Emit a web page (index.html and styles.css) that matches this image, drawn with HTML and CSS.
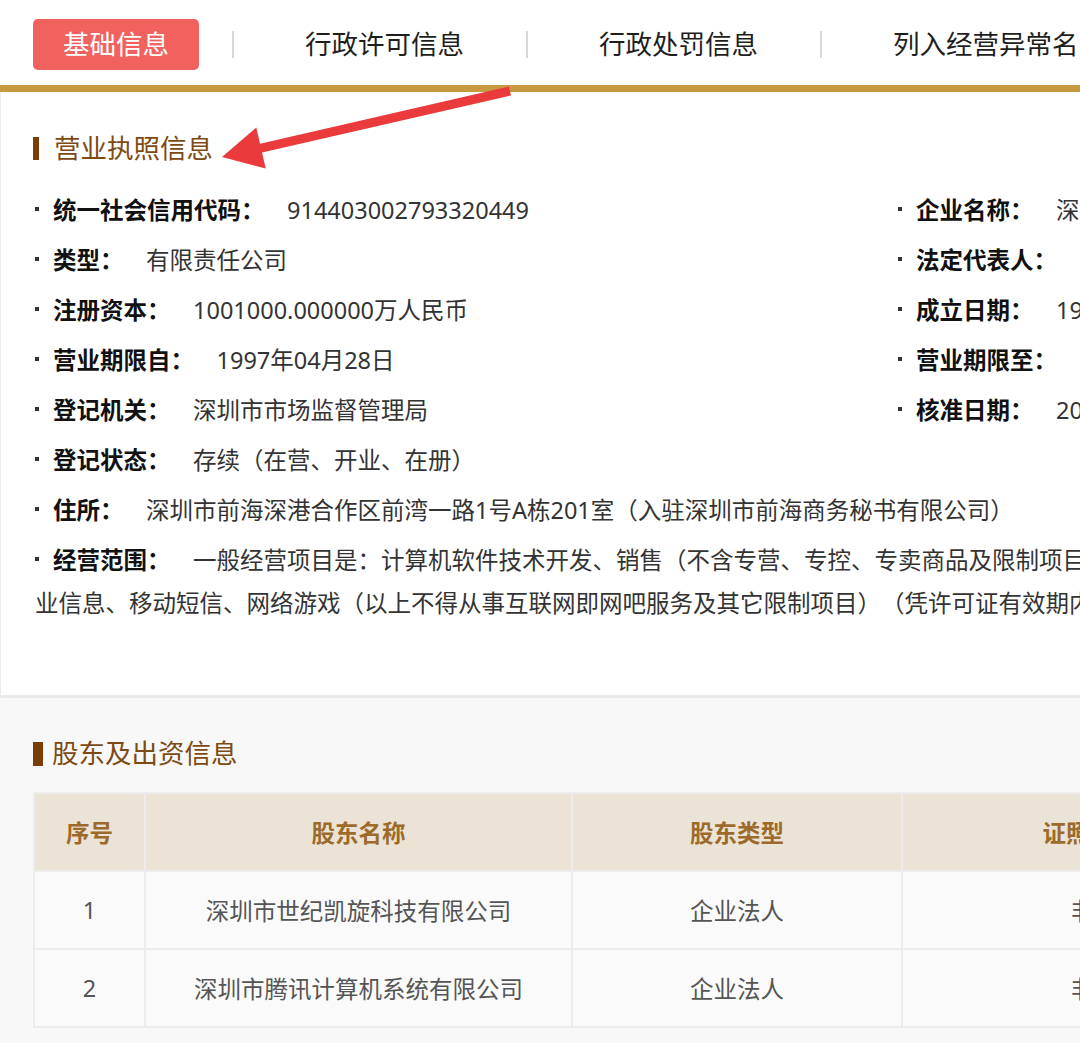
FILE: index.html
```html
<!DOCTYPE html>
<html lang="zh-CN">
<head>
<meta charset="utf-8">
<title>基础信息</title>
<link rel="stylesheet" href="styles.css">
</head>
<body>
<div class="page">
  <nav class="tabs">
    <a class="tab active">基础信息</a>
    <a class="tab plain">行政许可信息</a>
    <a class="tab plain">行政处罚信息</a>
    <a class="tab plain">列入经营异常名录信息</a>
    <a class="tab plain">列入严重违法失信企业名单信息</a>
  </nav>

  <section class="card">
    <h2 class="sec-title">营业执照信息</h2>
    <div class="row">
      <div class="cell left"><i class="dot"></i><span class="label">统一社会信用代码：</span><span class="val">914403002793320449</span></div>
      <div class="cell"><i class="dot"></i><span class="label">企业名称：</span><span class="val">深圳市腾讯计算机系统有限公司</span></div>
    </div>
    <div class="row">
      <div class="cell left"><i class="dot"></i><span class="label">类型：</span><span class="val">有限责任公司</span></div>
      <div class="cell"><i class="dot"></i><span class="label">法定代表人：</span><span class="val">马化腾</span></div>
    </div>
    <div class="row">
      <div class="cell left"><i class="dot"></i><span class="label">注册资本：</span><span class="val">1001000.000000万人民币</span></div>
      <div class="cell"><i class="dot"></i><span class="label">成立日期：</span><span class="val">1998年11月11日</span></div>
    </div>
    <div class="row">
      <div class="cell left"><i class="dot"></i><span class="label">营业期限自：</span><span class="val">1997年04月28日</span></div>
      <div class="cell"><i class="dot"></i><span class="label">营业期限至：</span><span class="val">永续经营</span></div>
    </div>
    <div class="row">
      <div class="cell left"><i class="dot"></i><span class="label">登记机关：</span><span class="val">深圳市市场监督管理局</span></div>
      <div class="cell"><i class="dot"></i><span class="label">核准日期：</span><span class="val">2023年03月21日</span></div>
    </div>
    <div class="row">
      <div class="cell"><i class="dot"></i><span class="label">登记状态：</span><span class="val">存续（在营、开业、在册）</span></div>
    </div>
    <div class="row">
      <div class="cell"><i class="dot"></i><span class="label">住所：</span><span class="val">深圳市前海深港合作区前湾一路1号A栋201室（入驻深圳市前海商务秘书有限公司）</span></div>
    </div>
    <div class="row">
      <div class="cell"><i class="dot"></i><span class="label">经营范围：</span><span class="val">一般经营项目是：计算机软件技术开发、销售（不含专营、专控、专卖商品及限制项目）；数据库及计算机网络服务。许可经营项目是：信息服务业务，商<br>业信息、移动短信、网络游戏（以上不得从事互联网即网吧服务及其它限制项目）（凭许可证有效期内经营）</span></div>
    </div>
  </section>

  <section class="holders">
    <h2 class="sec-title thick">股东及出资信息</h2>
    <table class="grid">
      <colgroup>
        <col class="c1"><col class="c2"><col class="c3"><col class="c4"><col class="c5">
      </colgroup>
      <thead>
        <tr><th>序号</th><th>股东名称</th><th>股东类型</th><th>证照/证件类型</th><th>证照/证件号码</th></tr>
      </thead>
      <tbody>
        <tr><td>1</td><td>深圳市世纪凯旋科技有限公司</td><td>企业法人</td><td>非公示项</td><td>非公示项</td></tr>
        <tr><td>2</td><td>深圳市腾讯计算机系统有限公司</td><td>企业法人</td><td>非公示项</td><td>非公示项</td></tr>
      </tbody>
    </table>
  </section>

  <svg class="arrow" width="1080" height="200" viewBox="0 0 1080 200">
    <polygon points="509,86.6 260,143.7 256.3,127.6 222,157 265.7,168.6 262,152.5 511,95.4" fill="#ea3a3c"/>
  </svg>
</div>
</body>
</html>
```
FILE: styles.css
```css
html, body {
  margin: 0;
  padding: 0;
  overflow: hidden;
  background: #f8f8f8;
}
body {
  font-family: "Noto Sans", "Noto Sans CJK SC", sans-serif;
  color: #333;
  text-spacing-trim: space-all;
}
.page {
  position: relative;
  width: 1700px;
  min-height: 1043px;
}

/* tabs */
.tabs {
  display: flex;
  align-items: center;
  height: 81px;
  padding: 4px 0 0 33px;
  background: #fff;
  border-bottom: 7px solid #c9993f;
  white-space: nowrap;
}
.tab {
  flex-shrink: 0;
  font-size: 26.5px;
  color: #1e1e1e;
}
.tab.active {
  width: 166px;
  height: 51px;
  line-height: 51px;
  text-align: center;
  background: #f1625f;
  color: #fff;
  border-radius: 5px;
  margin-right: 33px;
}
.tab.plain {
  height: 27px;
  line-height: 27px;
  border-left: 2px solid #d8d8d8;
  padding: 0 62px 0 71px;
}

/* card */
.card {
  background: #fff;
  border-left: 1px solid #ececec;
  border-bottom: 3px solid #e9e9e9;
  padding: 38px 0 63px 32px;
}
.sec-title {
  display: flex;
  align-items: center;
  margin: 0 0 22px;
  font-size: 26.5px;
  line-height: 37px;
  font-weight: normal;
  color: #7d4a14;
}
.sec-title::before {
  content: "";
  width: 6px;
  height: 23px;
  background: #7a3d05;
  margin-right: 15px;
}
.sec-title.thick::before {
  width: 10px;
  height: 24px;
  margin-right: 9px;
}
.row {
  display: flex;
  padding-left: 2px;
  margin-bottom: 7px;
  font-size: 23.5px;
  line-height: 43px;
  white-space: nowrap;
}
.cell.left {
  width: 863px;
  flex-shrink: 0;
}
.dot {
  display: inline-block;
  width: 4px;
  height: 4px;
  background: #333;
  vertical-align: middle;
  margin: 0 14px 8px 0;
}
.label {
  font-weight: bold;
  color: #111;
  margin-right: 22.5px;
}
.val {
  color: #333;
}

/* shareholders */
.holders {
  padding: 37px 0 40px 33px;
}
.holders .sec-title {
  margin-bottom: 20px;
}
.grid {
  border-collapse: collapse;
  table-layout: fixed;
  font-size: 23.5px;
  text-align: center;
}
.c1 { width: 111px; }
.c2 { width: 427px; }
.c3 { width: 330px; }
.c4 { width: 432px; }
.c5 { width: 360px; }
.grid th {
  height: 76px;
  background: #ebe3d6;
  color: #9c6b2b;
  font-weight: bold;
  border: 2px solid #ececec;
  padding: 0;
}
.grid td {
  height: 76px;
  background: #fafafa;
  color: #555;
  border: 2px solid #ececec;
  padding: 0;
}
.arrow {
  position: absolute;
  top: 0;
  left: 0;
  pointer-events: none;
}
```
